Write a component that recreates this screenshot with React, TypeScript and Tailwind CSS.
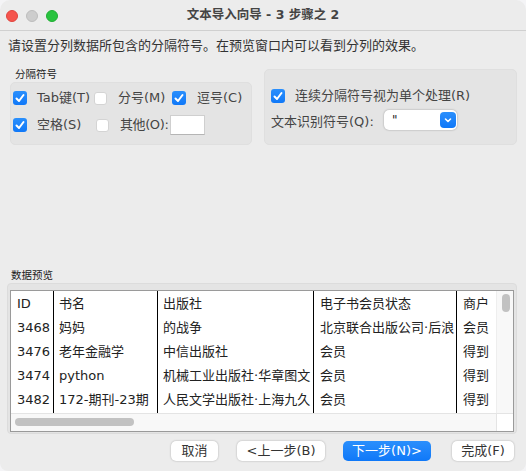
import React from 'react';

const font = { fontFamily: '"DejaVu Sans", "Noto Sans CJK SC", sans-serif' };

function Check({ on, className = '' }: { on?: boolean; className?: string }) {
  if (on) {
    return (
      <div className={`w-[14px] h-[14px] rounded-[3px] bg-gradient-to-b from-[#2a8ffc] to-[#0f78f8] flex items-center justify-center shrink-0 ${className}`}>
        <svg width="12" height="12" viewBox="0 0 12 12" fill="none">
          <path d="M2.5 6.5 L5 9 L9.5 3" stroke="white" strokeWidth="2" strokeLinecap="round" strokeLinejoin="round" />
        </svg>
      </div>
    );
  }
  return <div className={`w-[13px] h-[13px] rounded-[3px] bg-white border border-[#d4d4d4] shrink-0 ${className}`} />;
}

function Btn({ label, primary, w }: { label: string; primary?: boolean; w: string }) {
  return (
    <div
      className={`h-[20px] rounded-[5px] flex items-center justify-center text-[13px] whitespace-nowrap shrink-0 ${w} ${
        primary ? 'bg-gradient-to-b from-[#2a8ffc] to-[#0f78f8] text-white' : 'bg-white text-[#333] shadow-[0_0_2px_rgba(0,0,0,0.3)]'
      }`}
    >
      {label}
    </div>
  );
}

const colClass = [
  'w-[43px] pl-[6px] border-r border-black',
  'w-[104px] pl-[5px] border-r border-black',
  'w-[156px] pl-[5px] border-r border-black',
  'w-[143px] pl-[6px] border-r border-black',
  'w-[39px] pl-[6px]',
];

const rows = [
  ['ID', '书名', '出版社', '电子书会员状态', '商户'],
  ['3468', '妈妈', '的战争', '北京联合出版公司·后浪', '会员'],
  ['3476', '老年金融学', '中信出版社', '会员', '得到'],
  ['3474', 'python', '机械工业出版社·华章图文', '会员', '得到'],
  ['3482', '172-期刊-23期', '人民文学出版社·上海九久', '会员', '得到'],
];

export default function App() {
  return (
    <div className="w-[526px] h-[471px] bg-[#f4f4f6] overflow-hidden" style={font}>
      <div className="w-[526px] h-[471px] bg-[#ececec] rounded-t-[10px] rounded-b-[8px] flex flex-col text-[#333]">
        {/* Title bar */}
        <div className="h-[31px] shrink-0 border-b border-[#d0d0d0] grid grid-cols-[1fr_auto_1fr] items-center px-[6px] pt-[1px]">
          <div className="flex items-center gap-[8px]">
            <div className="w-[12px] h-[12px] rounded-full bg-[#f5544d] border border-[#e0443e]" />
            <div className="w-[12px] h-[12px] rounded-full bg-[#cdcdcd] border border-[#bdbdbd]" />
            <div className="w-[12px] h-[12px] rounded-full bg-[#29c33f] border border-[#1fae33]" />
          </div>
          <div className="text-[12.5px] font-bold text-[#444] whitespace-nowrap">文本导入向导 - 3 步骤之 2</div>
          <div />
        </div>

        <div className="text-[13px] leading-[18px] pl-[8px] pt-[6px] h-[38px] shrink-0">
          请设置分列数据所包含的分隔符号。在预览窗口内可以看到分列的效果。
        </div>

        {/* Separator options */}
        <div className="flex h-[76px] shrink-0 pl-[10px] gap-[12px]">
          <div className="w-[242px] flex flex-col">
            <div className="h-[13px] text-[10.5px] leading-[11px] pl-[5px] text-[#222]">分隔符号</div>
            <div className="h-[63px] bg-[#e4e4e4] border border-[#dfdfdf] rounded-[5px] pl-[2px] pt-[8px] text-[13px] text-[#444]">
              <div className="flex items-center h-[14px]">
                <Check on />
                <span className="ml-[10px] w-[57px] whitespace-nowrap">Tab键(T)</span>
                <Check />
                <span className="ml-[11px] w-[54px] whitespace-nowrap">分号(M)</span>
                <Check on />
                <span className="ml-[11px] whitespace-nowrap">逗号(C)</span>
              </div>
              <div className="flex items-center h-[20px] mt-[10px]">
                <Check on />
                <span className="ml-[10px] w-[59px] whitespace-nowrap">空格(S)</span>
                <Check />
                <span className="ml-[11px] w-[50px] whitespace-nowrap tracking-[-0.4px]">其他(O):</span>
                <div className="w-[35px] h-[20px] bg-white border border-[#cfcfcf] border-b-[#b5b5b5]" />
              </div>
            </div>
          </div>
          <div className="w-[253px] h-[76px] bg-[#e4e4e4] border border-[#dfdfdf] rounded-[5px] pl-[6px] pt-[19px] text-[13px] text-[#444]">
            <div className="flex items-center h-[14px]">
              <Check on />
              <span className="ml-[10px] whitespace-nowrap">连续分隔符号视为单个处理(R)</span>
            </div>
            <div className="flex items-center h-[20px] mt-[7px]">
              <span className="w-[113px] whitespace-nowrap pt-[3px]">文本识别符号(Q):</span>
              <div className="w-[73px] h-[20px] bg-white rounded-[5px] shadow-[0_0_2px_rgba(0,0,0,0.35)] flex items-center justify-between pl-[8px] pr-[1px]">
                <span className="text-[12px] leading-none text-[#222]">"</span>
                <div className="w-[16px] h-[16px] rounded-[4px] bg-gradient-to-b from-[#2a8ffc] to-[#0f78f8] flex items-center justify-center">
                  <svg width="10" height="10" viewBox="0 0 10 10" fill="none">
                    <path d="M2.5 4 L5 6.5 L7.5 4" stroke="white" strokeWidth="1.6" strokeLinecap="round" strokeLinejoin="round" />
                  </svg>
                </div>
              </div>
            </div>
          </div>
        </div>

        <div className="flex-1" />

        {/* Data preview */}
        <div className="shrink-0 pl-[7px]">
          <div className="h-[14px] text-[10.5px] leading-[12px] pl-[4px] text-[#222]">数据预览</div>
          <div className="w-[510px] h-[151px] bg-[#e4e4e4] border border-[#dcdcdc] rounded-[4px] pl-[2px] pt-[6px]">
            <div className="w-[504px] h-[142px] border border-[#9a9a9a] bg-white flex flex-col">
              <div className="flex h-[122px] shrink-0">
                <div className="w-[485px] text-[13px] text-[#222] flex">
                  {colClass.map((w, c) => (
                    <div key={c} className={`${w} shrink-0 flex flex-col`}>
                      {rows.map((r, i) => (
                        <div key={i} className="h-[24px] leading-[26px] whitespace-nowrap overflow-hidden">
                          {r[c]}
                        </div>
                      ))}
                    </div>
                  ))}
                </div>
                <div className="flex-1 bg-[#f8f8f8] border-l border-[#eeeeee] pt-[3px] pl-[5px]">
                  <div className="w-[8px] h-[18px] rounded-full bg-[#c2c2c2]" />
                </div>
              </div>
              <div className="flex flex-1 border-t border-[#e4e4e4]">
                <div className="w-[485px] bg-[#f8f8f8] pt-[4px] pl-[4px]">
                  <div className="w-[119px] h-[8px] rounded-full bg-[#c2c2c2]" />
                </div>
                <div className="flex-1 bg-white border-l border-[#e4e4e4]" />
              </div>
            </div>
          </div>
        </div>

        {/* Buttons */}
        <div className="h-[37px] shrink-0 flex items-start pt-[7px] pl-[171px]">
          <Btn label="取消" w="w-[47px]" />
          <Btn label="<上一步(B)" w="w-[88px] ml-[19px]" />
          <Btn label="下一步(N)>" primary w="w-[88px] ml-[18px]" />
          <Btn label="完成(F)" w="w-[62px] ml-[21px]" />
        </div>
      </div>
    </div>
  );
}
